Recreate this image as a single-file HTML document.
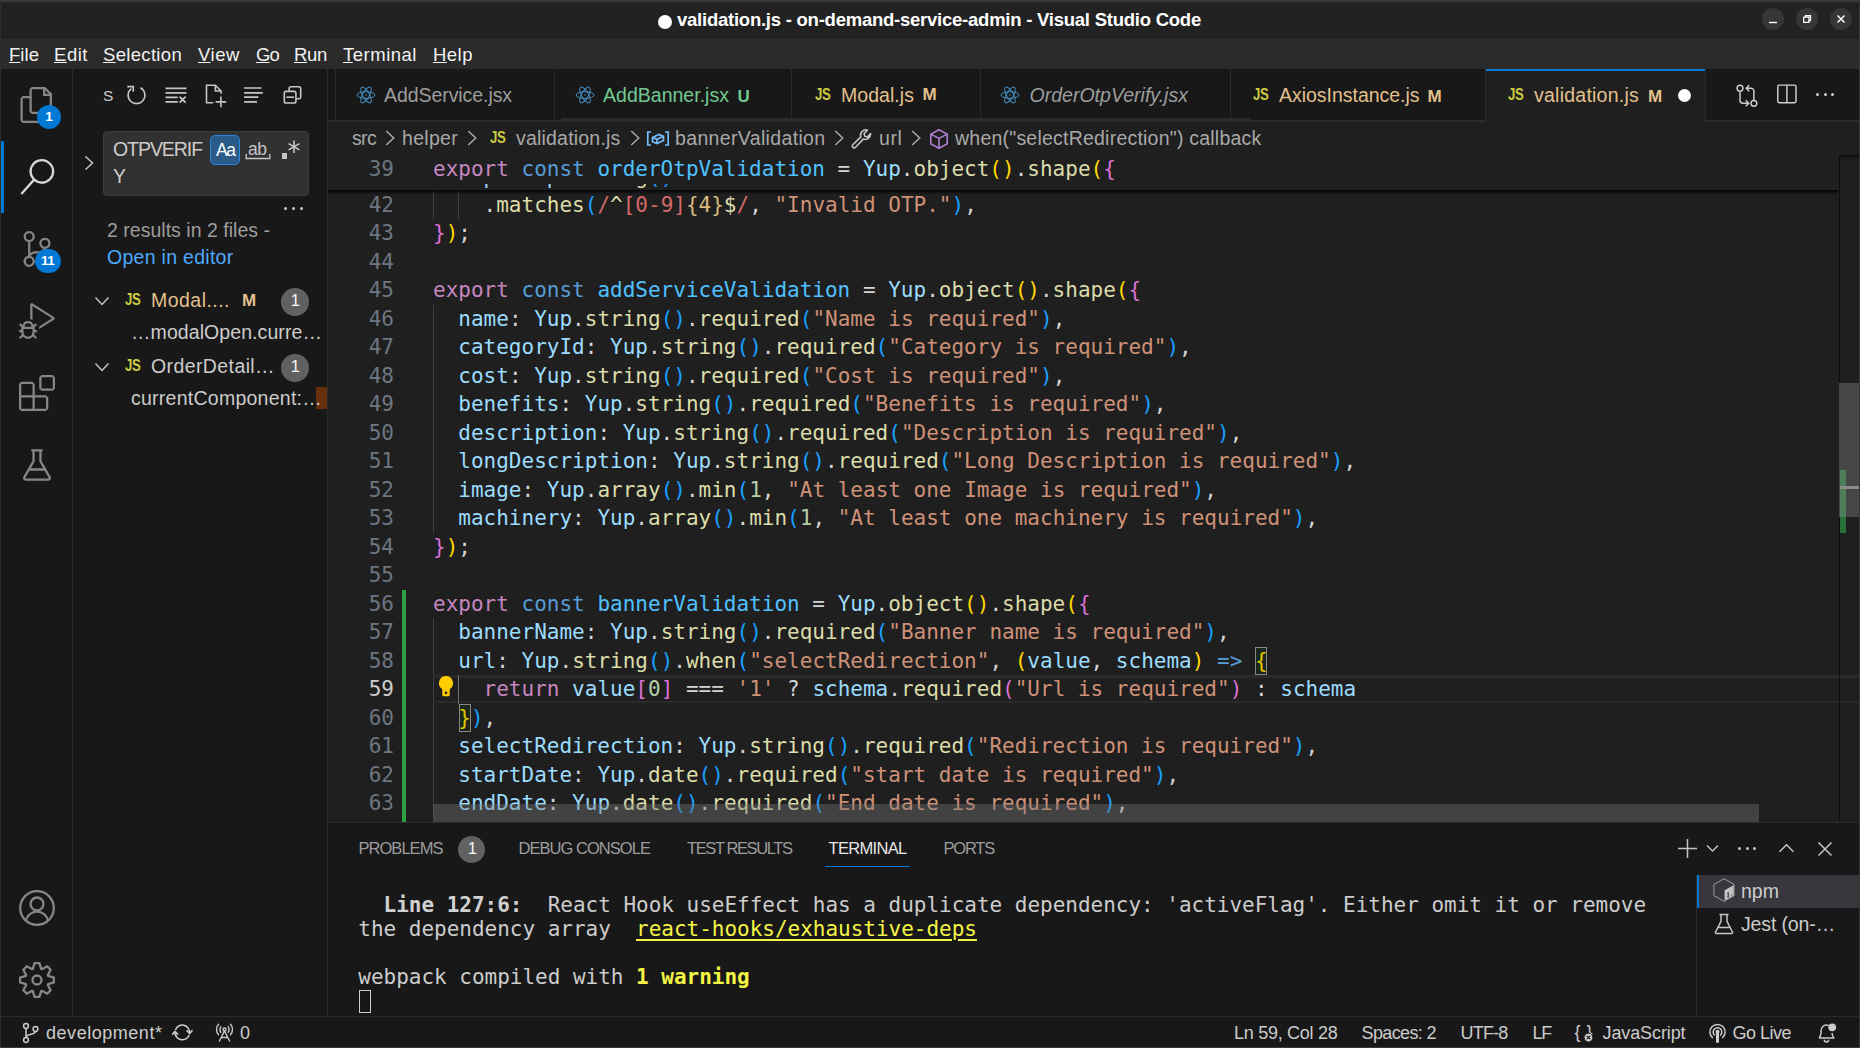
<!DOCTYPE html>
<html lang="en"><head><meta charset="utf-8"><title>validation.js - on-demand-service-admin - Visual Studio Code</title>
<style>
*{box-sizing:border-box}
html,body{margin:0;padding:0}
body{width:1860px;height:1048px;overflow:hidden;position:relative;background:#181818;font-family:'Liberation Sans', sans-serif;color:#ccc}
#root{position:absolute;left:0;top:0;width:1860px;height:1048px;overflow:hidden}
#root div,#root span.t,#root svg,#root pre{position:absolute}
span.t{white-space:pre;display:block}
.m{font-family:'DejaVu Sans Mono', 'Liberation Mono', monospace}
pre{margin:0;font-family:'DejaVu Sans Mono', 'Liberation Mono', monospace;font-size:21px;line-height:28px;white-space:pre;color:#d4d4d4}
u{text-decoration:underline;text-underline-offset:1px;text-decoration-thickness:1px}
.k{color:#c586c0}.c{color:#569cd6}.n{color:#4fc1ff}.v{color:#9cdcfe}.f{color:#dcdcaa}.s{color:#ce9178}.d{color:#b5cea8}
.b1{color:#ffd700}.b2{color:#da70d6}.b3{color:#179fff}.r{color:#d16969}.rq{color:#d7ba7d}.ry{color:#dcdcaa}
</style></head>
<body><div id="root">
<div style="left:0px;top:0px;width:1860px;height:38px;background:#222222;"></div>
<div style="left:0px;top:37px;width:1860px;height:1px;background:#191919;"></div>
<div style="left:0px;top:0px;width:1860px;height:1.5px;background:#3a3a3a;"></div>
<div style="left:0px;top:38px;width:1860px;height:31px;background:#2b2b2b;"></div>
<div style="left:0px;top:69px;width:1860px;height:979px;background:#181818;"></div>
<div style="left:72px;top:69px;width:1px;height:946px;background:#2b2b2b;"></div>
<div style="left:327px;top:69px;width:1px;height:946px;background:#2b2b2b;"></div>
<div style="left:328px;top:121px;width:1532px;height:701px;background:#1f1f1f;"></div>
<div style="left:328px;top:119.7px;width:1532px;height:2.3px;background:#2b2b2b;"></div>
<div style="left:328px;top:822px;width:1532px;height:1px;background:#2b2b2b;"></div>
<div style="left:0px;top:1016px;width:1860px;height:1px;background:#2b2b2b;"></div>
<div style="left:658px;top:14.5px;width:14px;height:14px;border-radius:50%;background:#fff"></div>
<span class="t" style="left:677px;top:7.05px;font-size:18.5px;line-height:25.9px;color:#fff;font-weight:bold;letter-spacing:-0.239px;">validation.js - on-demand-service-admin - Visual Studio Code</span>
<div style="left:1762.1px;top:8.1px;width:21.8px;height:21.8px;border-radius:50%;background:#373737"></div>
<div style="left:1796.1px;top:8.1px;width:21.8px;height:21.8px;border-radius:50%;background:#373737"></div>
<div style="left:1830.1px;top:8.1px;width:21.8px;height:21.8px;border-radius:50%;background:#373737"></div>
<svg style="left:1768px;top:14px;" width="10" height="10" viewBox="0 0 10 10"><path d="M1 8.5h8" stroke="#fff" stroke-width="1.4" fill="none"/></svg>
<svg style="left:1802px;top:14px;" width="10" height="10" viewBox="0 0 10 10"><path d="M1.7 3.2h5.2v5.2H1.7z M3.4 3V1.6h5.1v5.1H7.1" stroke="#fff" stroke-width="1.2" fill="none"/></svg>
<svg style="left:1836px;top:14px;" width="10" height="10" viewBox="0 0 10 10"><path d="M1.5 1.5l7 7M8.5 1.5l-7 7" stroke="#fff" stroke-width="1.5" fill="none"/></svg>
<span class="t" style="left:9px;top:42.05px;font-size:18.5px;line-height:25.9px;color:#f2f2f2;letter-spacing:0.043px;"><u>F</u>ile</span>
<span class="t" style="left:54px;top:42.05px;font-size:18.5px;line-height:25.9px;color:#f2f2f2;letter-spacing:0.527px;"><u>E</u>dit</span>
<span class="t" style="left:103px;top:42.05px;font-size:18.5px;line-height:25.9px;color:#f2f2f2;letter-spacing:0.321px;"><u>S</u>election</span>
<span class="t" style="left:198px;top:42.05px;font-size:18.5px;line-height:25.9px;color:#f2f2f2;letter-spacing:0.555px;"><u>V</u>iew</span>
<span class="t" style="left:256px;top:42.05px;font-size:18.5px;line-height:25.9px;color:#f2f2f2;letter-spacing:-0.844px;"><u>G</u>o</span>
<span class="t" style="left:294px;top:42.05px;font-size:18.5px;line-height:25.9px;color:#f2f2f2;letter-spacing:-0.318px;"><u>R</u>un</span>
<span class="t" style="left:343px;top:42.05px;font-size:18.5px;line-height:25.9px;color:#f2f2f2;letter-spacing:0.51px;"><u>T</u>erminal</span>
<span class="t" style="left:433px;top:42.05px;font-size:18.5px;line-height:25.9px;color:#f2f2f2;letter-spacing:0.48px;"><u>H</u>elp</span>
<div style="left:402px;top:590px;width:4px;height:232px;background:#2ea043;"></div>
<div style="left:433px;top:304.75px;width:1px;height:228.0px;background:#404040;"></div>
<div style="left:433px;top:617.75px;width:1px;height:199.5px;background:#404040;"></div>
<div style="left:433px;top:189.5px;width:1px;height:29px;background:#404040;"></div>
<div style="left:458px;top:189.5px;width:1px;height:29px;background:#404040;"></div>
<div style="left:433px;top:675px;width:1427px;height:2.5px;background:#2a2a2a;"></div>
<div style="left:433px;top:700.7px;width:1427px;height:2.6px;background:#2a2a2a;"></div>
<div style="left:457.7px;top:675px;width:1.8px;height:28.5px;background:#707070;"></div>
<span class="t m" style="right:1466px;top:191px;font-size:21px;line-height:28px;color:#6e7681">42</span>
<pre style="left:433px;top:191px">    .<span class="f">matches</span><span class="b3">(</span><span class="r">/</span><span class="ry">^</span><span class="r">[0-9]</span><span class="rq">{4}</span><span class="ry">$</span><span class="r">/</span>, <span class="s">"Invalid OTP."</span><span class="b3">)</span>,</pre>
<span class="t m" style="right:1466px;top:219px;font-size:21px;line-height:28px;color:#6e7681">43</span>
<pre style="left:433px;top:219px"><span class="b2">}</span><span class="b1">)</span>;</pre>
<span class="t m" style="right:1466px;top:248px;font-size:21px;line-height:28px;color:#6e7681">44</span>
<pre style="left:433px;top:248px"></pre>
<span class="t m" style="right:1466px;top:276px;font-size:21px;line-height:28px;color:#6e7681">45</span>
<pre style="left:433px;top:276px"><span class="k">export</span> <span class="c">const</span> <span class="n">addServiceValidation</span> = <span class="v">Yup</span>.<span class="f">object</span><span class="b1">()</span>.<span class="f">shape</span><span class="b1">(</span><span class="b2">{</span></pre>
<span class="t m" style="right:1466px;top:305px;font-size:21px;line-height:28px;color:#6e7681">46</span>
<pre style="left:433px;top:305px">  <span class="v">name</span>: <span class="v">Yup</span>.<span class="f">string</span><span class="b3">()</span>.<span class="f">required</span><span class="b3">(</span><span class="s">"Name is required"</span><span class="b3">)</span>,</pre>
<span class="t m" style="right:1466px;top:333px;font-size:21px;line-height:28px;color:#6e7681">47</span>
<pre style="left:433px;top:333px">  <span class="v">categoryId</span>: <span class="v">Yup</span>.<span class="f">string</span><span class="b3">()</span>.<span class="f">required</span><span class="b3">(</span><span class="s">"Category is required"</span><span class="b3">)</span>,</pre>
<span class="t m" style="right:1466px;top:362px;font-size:21px;line-height:28px;color:#6e7681">48</span>
<pre style="left:433px;top:362px">  <span class="v">cost</span>: <span class="v">Yup</span>.<span class="f">string</span><span class="b3">()</span>.<span class="f">required</span><span class="b3">(</span><span class="s">"Cost is required"</span><span class="b3">)</span>,</pre>
<span class="t m" style="right:1466px;top:390px;font-size:21px;line-height:28px;color:#6e7681">49</span>
<pre style="left:433px;top:390px">  <span class="v">benefits</span>: <span class="v">Yup</span>.<span class="f">string</span><span class="b3">()</span>.<span class="f">required</span><span class="b3">(</span><span class="s">"Benefits is required"</span><span class="b3">)</span>,</pre>
<span class="t m" style="right:1466px;top:419px;font-size:21px;line-height:28px;color:#6e7681">50</span>
<pre style="left:433px;top:419px">  <span class="v">description</span>: <span class="v">Yup</span>.<span class="f">string</span><span class="b3">()</span>.<span class="f">required</span><span class="b3">(</span><span class="s">"Description is required"</span><span class="b3">)</span>,</pre>
<span class="t m" style="right:1466px;top:447px;font-size:21px;line-height:28px;color:#6e7681">51</span>
<pre style="left:433px;top:447px">  <span class="v">longDescription</span>: <span class="v">Yup</span>.<span class="f">string</span><span class="b3">()</span>.<span class="f">required</span><span class="b3">(</span><span class="s">"Long Description is required"</span><span class="b3">)</span>,</pre>
<span class="t m" style="right:1466px;top:476px;font-size:21px;line-height:28px;color:#6e7681">52</span>
<pre style="left:433px;top:476px">  <span class="v">image</span>: <span class="v">Yup</span>.<span class="f">array</span><span class="b3">()</span>.<span class="f">min</span><span class="b3">(</span><span class="d">1</span>, <span class="s">"At least one Image is required"</span><span class="b3">)</span>,</pre>
<span class="t m" style="right:1466px;top:504px;font-size:21px;line-height:28px;color:#6e7681">53</span>
<pre style="left:433px;top:504px">  <span class="v">machinery</span>: <span class="v">Yup</span>.<span class="f">array</span><span class="b3">()</span>.<span class="f">min</span><span class="b3">(</span><span class="d">1</span>, <span class="s">"At least one machinery is required"</span><span class="b3">)</span>,</pre>
<span class="t m" style="right:1466px;top:533px;font-size:21px;line-height:28px;color:#6e7681">54</span>
<pre style="left:433px;top:533px"><span class="b2">}</span><span class="b1">)</span>;</pre>
<span class="t m" style="right:1466px;top:561px;font-size:21px;line-height:28px;color:#6e7681">55</span>
<pre style="left:433px;top:561px"></pre>
<span class="t m" style="right:1466px;top:590px;font-size:21px;line-height:28px;color:#6e7681">56</span>
<pre style="left:433px;top:590px"><span class="k">export</span> <span class="c">const</span> <span class="n">bannerValidation</span> = <span class="v">Yup</span>.<span class="f">object</span><span class="b1">()</span>.<span class="f">shape</span><span class="b1">(</span><span class="b2">{</span></pre>
<span class="t m" style="right:1466px;top:618px;font-size:21px;line-height:28px;color:#6e7681">57</span>
<pre style="left:433px;top:618px">  <span class="v">bannerName</span>: <span class="v">Yup</span>.<span class="f">string</span><span class="b3">()</span>.<span class="f">required</span><span class="b3">(</span><span class="s">"Banner name is required"</span><span class="b3">)</span>,</pre>
<span class="t m" style="right:1466px;top:647px;font-size:21px;line-height:28px;color:#6e7681">58</span>
<pre style="left:433px;top:647px">  <span class="v">url</span>: <span class="v">Yup</span>.<span class="f">string</span><span class="b3">()</span>.<span class="f">when</span><span class="b3">(</span><span class="s">"selectRedirection"</span>, <span class="b1">(</span><span class="v">value</span>, <span class="v">schema</span><span class="b1">)</span> <span class="c">=&gt;</span> <span class="b1">{</span></pre>
<span class="t m" style="right:1466px;top:675px;font-size:21px;line-height:28px;color:#ccc">59</span>
<pre style="left:433px;top:675px">    <span class="k">return</span> <span class="v">value</span><span class="b2">[</span><span class="d">0</span><span class="b2">]</span> === <span class="s">'1'</span> ? <span class="v">schema</span>.<span class="f">required</span><span class="b2">(</span><span class="s">"Url is required"</span><span class="b2">)</span> : <span class="v">schema</span></pre>
<span class="t m" style="right:1466px;top:704px;font-size:21px;line-height:28px;color:#6e7681">60</span>
<pre style="left:433px;top:704px">  <span class="b1">}</span><span class="b3">)</span>,</pre>
<span class="t m" style="right:1466px;top:732px;font-size:21px;line-height:28px;color:#6e7681">61</span>
<pre style="left:433px;top:732px">  <span class="v">selectRedirection</span>: <span class="v">Yup</span>.<span class="f">string</span><span class="b3">()</span>.<span class="f">required</span><span class="b3">(</span><span class="s">"Redirection is required"</span><span class="b3">)</span>,</pre>
<span class="t m" style="right:1466px;top:761px;font-size:21px;line-height:28px;color:#6e7681">62</span>
<pre style="left:433px;top:761px">  <span class="v">startDate</span>: <span class="v">Yup</span>.<span class="f">date</span><span class="b3">()</span>.<span class="f">required</span><span class="b3">(</span><span class="s">"start date is required"</span><span class="b3">)</span>,</pre>
<span class="t m" style="right:1466px;top:789px;font-size:21px;line-height:28px;color:#6e7681">63</span>
<pre style="left:433px;top:789px">  <span class="v">endDate</span>: <span class="v">Yup</span>.<span class="f">date</span><span class="b3">()</span>.<span class="f">required</span><span class="b3">(</span><span class="s">"End date is required"</span><span class="b3">)</span>,</pre>
<div style="left:1255px;top:647px;width:12px;height:28px;background:rgba(0,100,0,0.12);border:1px solid #888"></div>
<div style="left:458.8px;top:704px;width:12px;height:28px;background:rgba(0,100,0,0.12);border:1px solid #888"></div>
<div style="left:328px;top:154px;width:1510px;height:36px;background:#1f1f1f;overflow:hidden">
<span class="t m" style="right:1444px;top:9px;font-size:21px;line-height:28px;color:#6e7681">40</span>
<pre style="left:105px;top:9px">  <span class="v">otp</span>: <span class="v">Yup</span>.<span class="f">string</span><span class="b3">()</span></pre>
<div style="left:0;top:0;width:1510px;height:29.6px;background:#1f1f1f"></div>
<span class="t m" style="right:1444px;top:1px;font-size:21px;line-height:28px;color:#6e7681">39</span>
<pre style="left:105px;top:1px"><span class="k">export</span> <span class="c">const</span> <span class="n">orderOtpValidation</span> = <span class="v">Yup</span>.<span class="f">object</span><span class="b1">()</span>.<span class="f">shape</span><span class="b1">(</span><span class="b2">{</span></pre>
</div>
<div style="left:328px;top:190px;width:1510px;height:5px;background:linear-gradient(#000 0,rgba(0,0,0,.55) 30%,rgba(0,0,0,0) 100%)"></div>
<div style="left:1839px;top:155px;width:1px;height:667px;background:#0d0d0d;"></div>
<div style="left:1840px;top:155px;width:19px;height:4px;background:linear-gradient(#0a0a0a,rgba(0,0,0,0))"></div>
<div style="left:1839px;top:383px;width:20.5px;height:133.7px;background:#464646;"></div>
<div style="left:1840px;top:470px;width:6px;height:46.7px;background:#4f7e5b;"></div>
<div style="left:1840px;top:516.7px;width:6px;height:16.6px;background:#28713a;"></div>
<div style="left:1840px;top:486.3px;width:19.3px;height:3.2px;background:#8c8c8c;"></div>
<div style="left:433px;top:804.3px;width:1326px;height:17.7px;background:rgba(121,121,121,0.4);"></div>
<div style="left:335px;top:69px;width:1px;height:52px;background:#2b2b2b;"></div>
<div style="left:554px;top:69px;width:1px;height:52px;background:#2b2b2b;"></div>
<div style="left:791px;top:69px;width:1px;height:52px;background:#2b2b2b;"></div>
<div style="left:980px;top:69px;width:1px;height:52px;background:#2b2b2b;"></div>
<div style="left:1230px;top:69px;width:1px;height:52px;background:#2b2b2b;"></div>
<div style="left:1485px;top:69px;width:1px;height:52px;background:#2b2b2b;"></div>
<div style="left:1705px;top:69px;width:1px;height:52px;background:#2b2b2b;"></div>
<div style="left:1486px;top:69px;width:219px;height:53px;background:#1f1f1f;"></div>
<div style="left:1486px;top:69px;width:219px;height:2px;background:#0078d4;"></div>
<div style="left:561px;top:118px;width:690px;height:3px;background:#2c2c2c;"></div>
<svg style="left:355px;top:84px;" width="22" height="22" viewBox="-11 -11 22 22"><ellipse cx="0" cy="0" rx="8.9" ry="3.382" transform="rotate(0)" fill="none" stroke="#4693c6" stroke-width="0.95"/><ellipse cx="0" cy="0" rx="8.9" ry="3.382" transform="rotate(60)" fill="none" stroke="#4693c6" stroke-width="0.95"/><ellipse cx="0" cy="0" rx="8.9" ry="3.382" transform="rotate(120)" fill="none" stroke="#4693c6" stroke-width="0.95"/><circle cx="0" cy="0" r="0.9" fill="#4693c6" opacity="0.6"/></svg>
<span class="t" style="left:384px;top:82.35px;font-size:19.5px;line-height:27.3px;color:#9d9d9d;letter-spacing:-0.069px;">AddService.jsx</span>
<svg style="left:574px;top:84px;" width="22" height="22" viewBox="-11 -11 22 22"><ellipse cx="0" cy="0" rx="8.9" ry="3.382" transform="rotate(0)" fill="none" stroke="#4693c6" stroke-width="0.95"/><ellipse cx="0" cy="0" rx="8.9" ry="3.382" transform="rotate(60)" fill="none" stroke="#4693c6" stroke-width="0.95"/><ellipse cx="0" cy="0" rx="8.9" ry="3.382" transform="rotate(120)" fill="none" stroke="#4693c6" stroke-width="0.95"/><circle cx="0" cy="0" r="0.9" fill="#4693c6" opacity="0.6"/></svg>
<span class="t" style="left:603px;top:82.35px;font-size:19.5px;line-height:27.3px;color:#73c991;letter-spacing:0.018px;">AddBanner.jsx</span>
<span class="t" style="left:737.5px;top:85.1px;font-size:17px;line-height:23.8px;color:#73c991;font-weight:bold;letter-spacing:-0.781px;">U</span>
<span class="t" style="left:814.5px;top:83.25px;font-size:16.5px;line-height:23.1px;color:#cbcb41;font-weight:bold;transform:scaleX(0.8);transform-origin:0 50%;letter-spacing:-0.425px;">JS</span>
<span class="t" style="left:841px;top:82.35px;font-size:19.5px;line-height:27.3px;color:#e2c08d;letter-spacing:0.047px;">Modal.js</span>
<span class="t" style="left:922.5px;top:82.6px;font-size:17px;line-height:23.8px;color:#e2c08d;font-weight:bold;letter-spacing:0.328px;">M</span>
<svg style="left:999px;top:84px;" width="22" height="22" viewBox="-11 -11 22 22"><ellipse cx="0" cy="0" rx="8.9" ry="3.382" transform="rotate(0)" fill="none" stroke="#4693c6" stroke-width="0.95"/><ellipse cx="0" cy="0" rx="8.9" ry="3.382" transform="rotate(60)" fill="none" stroke="#4693c6" stroke-width="0.95"/><ellipse cx="0" cy="0" rx="8.9" ry="3.382" transform="rotate(120)" fill="none" stroke="#4693c6" stroke-width="0.95"/><circle cx="0" cy="0" r="0.9" fill="#4693c6" opacity="0.6"/></svg>
<span class="t" style="left:1029.5px;top:82.35px;font-size:19.5px;line-height:27.3px;color:#9d9d9d;font-style:italic;letter-spacing:0.016px;">OrderOtpVerify.jsx</span>
<span class="t" style="left:1252.5px;top:83.25px;font-size:16.5px;line-height:23.1px;color:#cbcb41;font-weight:bold;transform:scaleX(0.8);transform-origin:0 50%;letter-spacing:-0.425px;">JS</span>
<span class="t" style="left:1279px;top:82.35px;font-size:19.5px;line-height:27.3px;color:#e2c08d;letter-spacing:-0.025px;">AxiosInstance.js</span>
<span class="t" style="left:1427.5px;top:84.6px;font-size:17px;line-height:23.8px;color:#e2c08d;font-weight:bold;letter-spacing:0.328px;">M</span>
<span class="t" style="left:1508px;top:83.25px;font-size:16.5px;line-height:23.1px;color:#cbcb41;font-weight:bold;transform:scaleX(0.8);transform-origin:0 50%;letter-spacing:-0.425px;">JS</span>
<span class="t" style="left:1534px;top:82.35px;font-size:19.5px;line-height:27.3px;color:#e2c08d;letter-spacing:0.239px;">validation.js</span>
<span class="t" style="left:1648px;top:84.6px;font-size:17px;line-height:23.8px;color:#e2c08d;font-weight:bold;letter-spacing:0.328px;">M</span>
<div style="left:1677.5px;top:88.5px;width:13.5px;height:13.5px;border-radius:50%;background:#fff"></div>
<svg style="left:1735px;top:83px;" width="24" height="24" viewBox="0 0 24 24"><g fill="none" stroke="#d0d0d0" stroke-width="1.450"><circle cx="5" cy="5.200" r="2.900"/><circle cx="18.900" cy="20.300" r="2.900"/><path d="M5 8.200v9a3 3 0 0 0 3 3h5.500M10.700 17.300l3 3-3 3M18.900 17.300V8.200a3 3 0 0 0-3-3h-4.700M14.200 8.200l-3-3 3-3"/></g></svg>
<svg style="left:1775px;top:82.3px;" width="24" height="24" viewBox="0 0 24 24"><g fill="none" stroke="#d0d0d0" stroke-width="1.450"><rect x="2.800" y="3.100" width="18.200" height="17.600" rx="1.400"/><path d="M11.900 3v18"/></g></svg>
<div style="left:1816px;top:93.300px;width:3px;height:3px;border-radius:50%;background:#d0d0d0"></div>
<div style="left:1823.5px;top:93.300px;width:3px;height:3px;border-radius:50%;background:#d0d0d0"></div>
<div style="left:1831px;top:93.300px;width:3px;height:3px;border-radius:50%;background:#d0d0d0"></div>
<span class="t" style="left:352px;top:124.85px;font-size:19.5px;line-height:27.3px;color:#a9a9a9;letter-spacing:-0.667px;">src</span>
<svg style="left:384px;top:129.3px;" width="12" height="18" viewBox="0 0 12 18"><path d="M2.250 2l7.500 7-7.500 7" fill="none" stroke="#a9a9a9" stroke-width="1.500"/></svg>
<span class="t" style="left:402px;top:124.85px;font-size:19.5px;line-height:27.3px;color:#a9a9a9;letter-spacing:0.297px;">helper</span>
<svg style="left:465.5px;top:129.3px;" width="12" height="18" viewBox="0 0 12 18"><path d="M2.250 2l7.500 7-7.500 7" fill="none" stroke="#a9a9a9" stroke-width="1.500"/></svg>
<span class="t" style="left:490px;top:126.25px;font-size:16.5px;line-height:23.1px;color:#cbcb41;font-weight:bold;transform:scaleX(0.8);transform-origin:0 50%;letter-spacing:-0.425px;">JS</span>
<span class="t" style="left:516px;top:124.85px;font-size:19.5px;line-height:27.3px;color:#a9a9a9;letter-spacing:0.201px;">validation.js</span>
<svg style="left:628.5px;top:129.3px;" width="12" height="18" viewBox="0 0 12 18"><path d="M2.250 2l7.500 7-7.500 7" fill="none" stroke="#a9a9a9" stroke-width="1.500"/></svg>
<svg style="left:646px;top:128px;" width="24" height="22" viewBox="0 0 24 22"><g fill="none" stroke="#75beff" stroke-width="1.7"><path d="M5 4H1.8v13H5M19 4h3.2v13H19"/><path d="M6.5 9.5l6.5-3 4.5 1.8v4.2l-6.5 3-4.5-1.8zM6.5 9.5l4.5 1.8 6.5-3M11 11.3v4.2"/></g></svg>
<span class="t" style="left:675px;top:124.85px;font-size:19.5px;line-height:27.3px;color:#a9a9a9;letter-spacing:0.349px;">bannerValidation</span>
<svg style="left:832.5px;top:129.3px;" width="12" height="18" viewBox="0 0 12 18"><path d="M2.250 2l7.500 7-7.500 7" fill="none" stroke="#a9a9a9" stroke-width="1.500"/></svg>
<svg style="left:851px;top:128px;" width="22" height="22" viewBox="0 0 22 22"><path d="M19.5 6.2a5.3 5.3 0 0 1-7.3 4.9l-7.6 8.2a1.9 1.9 0 0 1-2.8-2.6l8-7.8a5.3 5.3 0 0 1 6.6-6.7l-3.3 3.4.7 2.6 2.7.7 3.1-3.4c.1.3-.1.4-.1.7z" fill="none" stroke="#c5c5c5" stroke-width="1.6" stroke-linejoin="round"/></svg>
<span class="t" style="left:879px;top:124.85px;font-size:19.5px;line-height:27.3px;color:#a9a9a9;letter-spacing:0.609px;">url</span>
<svg style="left:909.5px;top:129.3px;" width="12" height="18" viewBox="0 0 12 18"><path d="M2.250 2l7.500 7-7.500 7" fill="none" stroke="#a9a9a9" stroke-width="1.500"/></svg>
<svg style="left:928px;top:128px;" width="22" height="22" viewBox="0 0 22 22"><g fill="none" stroke="#b180d7" stroke-width="1.6" stroke-linejoin="round"><path d="M11 1.8l8.2 4.3v9.8L11 20.2l-8.2-4.3V6.1z"/><path d="M2.8 6.1L11 10.4l8.2-4.3M11 10.4v9.8"/></g></svg>
<span class="t" style="left:955px;top:124.85px;font-size:19.5px;line-height:27.3px;color:#a9a9a9;letter-spacing:0.224px;">when("selectRedirection") callback</span>
<svg style="left:437px;top:676.3px;" width="18" height="21" viewBox="0 0 18 21"><path fill-rule="evenodd" d="M9 .050a7.050 7.050 0 0 0-4.200 12.700c.400.400.500.800.500 1.300V19a1.200 1.200 0 0 0 1.200 1.200h5a1.200 1.200 0 0 0 1.200-1.200v-4.950c0-.500.100-.900.500-1.300A7.050 7.050 0 0 0 9 .050zM7.900 15.400h2.200v2.600H7.900z" fill="#ffcc00"/></svg>
<svg style="left:18.5px;top:87px;" width="36" height="36" viewBox="0 0 24 24"><path d="M17.5 0h-9L7 1.5V6H2.5L1 7.5v15.07L2.5 24h12.07L16 22.57V18h4.7l1.3-1.43V4.5L17.5 0zm0 2.12l2.38 2.38H17.5V2.12zm-3 20.38h-12v-15H7v9.07L8.5 18h6v4.5zm6-6h-12v-15H16V6h4.5v10.5z" fill="#868686"/></svg>
<svg style="left:18.5px;top:159px;" width="36" height="36" viewBox="0 0 24 24"><path d="M15.25 0a8.25 8.25 0 0 0-6.18 13.72L1 22.88l1.12 1 8.05-9.12A8.251 8.251 0 1 0 15.25.01V0zm0 15a6.75 6.75 0 1 1 0-13.5 6.75 6.75 0 0 1 0 13.5z" fill="#d7d7d7"/></svg>
<svg style="left:18.5px;top:231px;" width="36" height="36" viewBox="0 0 24 24"><path d="M21.007 8.222A3.738 3.738 0 0 0 15.045 5.2a3.737 3.737 0 0 0 1.156 6.583 2.988 2.988 0 0 1-2.668 1.67h-2.99a4.456 4.456 0 0 0-2.989 1.165V7.4a3.737 3.737 0 1 0-1.494 0v9.117a3.776 3.776 0 1 0 1.816.099 2.99 2.99 0 0 1 2.668-1.667h2.99a4.484 4.484 0 0 0 4.223-3.039 3.736 3.736 0 0 0 3.25-3.687zM4.565 3.738a2.242 2.242 0 1 1 4.484 0 2.242 2.242 0 0 1-4.484 0zm4.484 16.441a2.242 2.242 0 1 1-4.484 0 2.242 2.242 0 0 1 4.484 0zm8.221-9.715a2.242 2.242 0 1 1 0-4.485 2.242 2.242 0 0 1 0 4.485z" fill="#868686"/></svg>
<svg style="left:18.5px;top:303px;" width="36" height="36" viewBox="0 0 24 24"><path d="M10.94 13.5l-1.32 1.32a3.73 3.73 0 0 0-7.24 0L1.06 13.5 0 14.56l1.72 1.72-.22.22V18H0v1.5h1.5v.08c.077.489.214.966.41 1.42L0 22.94 1.06 24l1.65-1.65A4.308 4.308 0 0 0 6 24a4.31 4.31 0 0 0 3.29-1.65L10.94 24 12 22.94 10.09 21c.198-.464.336-.951.41-1.45v-.1H12V18h-1.5v-1.5l-.22-.22L12 14.56l-1.06-1.06zM6 13.5a2.25 2.25 0 0 1 2.25 2.25h-4.5A2.25 2.25 0 0 1 6 13.5zm3 6a3.33 3.33 0 0 1-3 3 3.33 3.33 0 0 1-3-3v-2.25h6v2.25zm14.76-9.9v1.26L13.5 17.37V15.6l8.5-5.37L9 2v9.46a5.07 5.07 0 0 0-1.5-.72V.63L8.64 0l15.12 9.6z" fill="#868686"/></svg>
<svg style="left:18.5px;top:375px;" width="36" height="36" viewBox="0 0 24 24"><path d="M13.5 1.5L15 0h7.5L24 1.5V9l-1.5 1.5H15L13.5 9V1.5zm1.5 0V9h7.5V1.5H15zM0 15V6l1.5-1.5H9L10.5 6v7.5H18l1.5 1.5v7.5L18 24H1.5L0 22.5V15zm9-1.5V6H1.5v7.5H9zM9 15H1.5v7.5H9V15zm1.5 7.5H18V15h-7.5v7.5z" fill="#868686"/></svg>
<svg style="left:18.5px;top:447px;" width="36" height="36" viewBox="0 0 24 24"><path d="M8.2 2.2h7.6M9.7 2.2v7.3L3.6 20.1a1 1 0 0 0 .9 1.6h15a1 1 0 0 0 .9-1.6L14.3 9.5V2.2M6.6 15h10.8" fill="none" stroke="#868686" stroke-width="1.55" stroke-linejoin="round"/></svg>
<svg style="left:18.5px;top:890px;" width="36" height="36" viewBox="0 0 24 24"><g fill="none" stroke="#868686" stroke-width="1.55"><circle cx="12" cy="12" r="11.2"/><circle cx="12" cy="9.3" r="4.3"/><path d="M4.6 20.3a7.6 7.6 0 0 1 14.8 0"/></g></svg>
<svg style="left:18.5px;top:962.2px;" width="36" height="36" viewBox="0 0 24 24"><g fill="none" stroke="#868686" stroke-width="1.55" stroke-linejoin="round"><path d="M9.18 4.62L10.39 0.71L13.61 0.71L14.82 4.62L15.23 4.79L18.84 2.88L21.12 5.16L19.21 8.77L19.38 9.18L23.29 10.39L23.29 13.61L19.38 14.82L19.21 15.23L21.12 18.84L18.84 21.12L15.23 19.21L14.82 19.38L13.61 23.29L10.39 23.29L9.18 19.38L8.77 19.21L5.16 21.12L2.88 18.84L4.79 15.23L4.62 14.82L0.71 13.61L0.71 10.39L4.62 9.18L4.79 8.77L2.88 5.16L5.16 2.88L8.77 4.79z"/><circle cx="12" cy="12" r="3"/></g></svg>
<div style="left:1px;top:141px;width:3px;height:72px;background:#0078d4;"></div>
<div style="left:36.5px;top:105px;width:24px;height:24px;border-radius:50%;background:#0078d4"></div>
<span class="t" style="left:45.25px;top:108.05px;font-size:13.5px;line-height:18.9px;color:#fff;font-weight:bold;letter-spacing:-1.016px;">1</span>
<div style="left:34.5px;top:248.5px;width:26.5px;height:24px;border-radius:12px;background:#0078d4"></div>
<span class="t" style="left:41px;top:251.55px;font-size:13.5px;line-height:18.9px;color:#fff;font-weight:bold;letter-spacing:-0.391px;">11</span>
<span class="t" style="left:103px;top:84.65px;font-size:15.5px;line-height:21.7px;color:#ccc;letter-spacing:-1.344px;">S</span>
<svg style="left:125px;top:83px;" width="24" height="24" viewBox="0 0 24 24"><path d="M15.440 4.780A8.400 8.400 0 1 1 6.330 5.580M2.300 3.600h6v5.200" fill="none" stroke="#c5c5c5" stroke-width="1.600"/></svg>
<svg style="left:164.6px;top:83px;" width="24" height="24" viewBox="0 0 24 24"><path d="M0.500 5.400h21M0.500 9.900h21M0.500 14.300h12.300M0.500 18.900h12.300M14.600 13.600l6 6M20.600 13.600l-6 6" fill="none" stroke="#c5c5c5" stroke-width="1.700"/></svg>
<svg style="left:203px;top:81px;" width="26" height="28" viewBox="0 0 26 28"><path d="M10.200 21.700H3.500V4.300h8.900l5.700 5.700v2.700M12.400 4.600v5.400h5.400M12.600 20.900h10.600M17.900 15.600v10.600" fill="none" stroke="#c5c5c5" stroke-width="1.600"/></svg>
<svg style="left:243px;top:83px;" width="24" height="24" viewBox="0 0 24 24"><path d="M1.100 5h17.400M1.100 9.800h18.700M1.100 14.200h14.200M1.100 18.900h12.900" fill="none" stroke="#c5c5c5" stroke-width="1.700"/></svg>
<svg style="left:281px;top:83px;" width="24" height="24" viewBox="0 0 24 24"><g fill="none" stroke="#c5c5c5" stroke-width="1.600"><path d="M8.100 8.400V5.600a1.800 1.800 0 0 1 1.800-1.800h8a1.800 1.800 0 0 1 1.800 1.800v8.400a1.800 1.800 0 0 1-1.800 1.800h-3"/><rect x="3.300" y="8.400" width="11.600" height="11.600" rx="1.800"/><path d="M5.400 14.200h7.700"/></g></svg>
<svg style="left:82.5px;top:153.8px;" width="12.0" height="18.0" viewBox="0 0 12 18"><path d="M2.5 2.5l7 6.5-7 6.5" fill="none" stroke="#c5c5c5" stroke-width="1.5"/></svg>
<div style="left:103px;top:131px;width:206px;height:64.5px;background:#313131;border:1px solid #3c3c3c;border-radius:4px"></div>
<span class="t" style="left:113px;top:135.85px;font-size:19.5px;line-height:27.3px;color:#ccc;letter-spacing:-1.064px;">OTPVERIF</span>
<span class="t" style="left:113px;top:162.85px;font-size:19.5px;line-height:27.3px;color:#ccc;letter-spacing:-1.516px;">Y</span>
<div style="left:210px;top:135px;width:30px;height:30px;background:#295a88;border:1.5px solid #2488db;border-radius:5px"></div>
<span class="t" style="left:216px;top:137.75px;font-size:17.5px;line-height:24.5px;color:#fff;letter-spacing:-1.453px;">Aa</span>
<span class="t" style="left:248px;top:136.75px;font-size:17.5px;line-height:24.5px;color:#c5c5c5;letter-spacing:-0.484px;">ab</span>
<svg style="left:245px;top:153px;" width="26" height="8" viewBox="0 0 26 8"><path d="M1.2 1v4.500h23.600V1" fill="none" stroke="#c5c5c5" stroke-width="1.400"/></svg>
<div style="left:281.5px;top:153px;width:5.5px;height:6px;background:#c5c5c5;"></div>
<svg style="left:287px;top:139px;" width="14" height="16" viewBox="0 0 14 16"><path d="M7 1.500v12.500M1.600 4.600l10.800 6.300M12.400 4.600L1.600 10.900" fill="none" stroke="#c5c5c5" stroke-width="1.600"/></svg>
<div style="left:284px;top:206.5px;width:3px;height:3px;border-radius:50%;background:#c5c5c5"></div>
<div style="left:292px;top:206.5px;width:3px;height:3px;border-radius:50%;background:#c5c5c5"></div>
<div style="left:300px;top:206.5px;width:3px;height:3px;border-radius:50%;background:#c5c5c5"></div>
<span class="t" style="left:107px;top:217.35px;font-size:19.5px;line-height:27.3px;color:#9d9d9d;letter-spacing:0.02px;">2 results in 2 files -</span>
<span class="t" style="left:107px;top:244.35px;font-size:19.5px;line-height:27.3px;color:#4daafc;letter-spacing:0.286px;">Open in editor</span>
<svg style="left:92.5px;top:294.5px;" width="18" height="12" viewBox="0 0 18 12"><path d="M2.5 2.5l6.5 7 6.5-7" fill="none" stroke="#c5c5c5" stroke-width="1.5"/></svg>
<span class="t" style="left:125px;top:288.25px;font-size:16.5px;line-height:23.1px;color:#cbcb41;font-weight:bold;transform:scaleX(0.8);transform-origin:0 50%;letter-spacing:-0.425px;">JS</span>
<span class="t" style="left:151px;top:286.85px;font-size:19.5px;line-height:27.3px;color:#e2c08d;letter-spacing:0.467px;">Modal....</span>
<span class="t" style="left:242px;top:289.1px;font-size:17px;line-height:23.8px;color:#e2c08d;font-weight:bold;letter-spacing:0.328px;">M</span>
<div style="left:280.5px;top:287.5px;width:28px;height:28px;border-radius:50%;background:#616161"></div>
<span class="t" style="left:290.75px;top:289.25px;font-size:16.5px;line-height:23.1px;color:#f8f8f8;letter-spacing:-1.688px;">1</span>
<span class="t" style="left:131px;top:318.85px;font-size:19.5px;line-height:27.3px;color:#ccc;letter-spacing:0.078px;">…modalOpen.curre…</span>
<svg style="left:92.5px;top:360.5px;" width="18" height="12" viewBox="0 0 18 12"><path d="M2.5 2.5l6.5 7 6.5-7" fill="none" stroke="#c5c5c5" stroke-width="1.5"/></svg>
<span class="t" style="left:125px;top:354.25px;font-size:16.5px;line-height:23.1px;color:#cbcb41;font-weight:bold;transform:scaleX(0.8);transform-origin:0 50%;letter-spacing:-0.425px;">JS</span>
<span class="t" style="left:151px;top:352.85px;font-size:19.5px;line-height:27.3px;color:#ccc;letter-spacing:0.4px;">OrderDetail…</span>
<div style="left:280.5px;top:353.5px;width:28px;height:28px;border-radius:50%;background:#616161"></div>
<span class="t" style="left:290.75px;top:355.25px;font-size:16.5px;line-height:23.1px;color:#f8f8f8;letter-spacing:-1.688px;">1</span>
<div style="left:316px;top:387px;width:10.5px;height:21.5px;background:#66300c;"></div>
<span class="t" style="left:131px;top:384.85px;font-size:19.5px;line-height:27.3px;color:#ccc;letter-spacing:0.254px;">currentComponent:…</span>
<span class="t" style="left:358.5px;top:836.95px;font-size:16.5px;line-height:23.1px;color:#9d9d9d;letter-spacing:-0.963px;">PROBLEMS</span>
<div style="left:458.0px;top:835.5px;width:27.0px;height:27.0px;border-radius:50%;background:#616161"></div>
<span class="t" style="left:467.75px;top:836.75px;font-size:16.5px;line-height:23.1px;color:#f8f8f8;letter-spacing:-1.688px;">1</span>
<span class="t" style="left:518.5px;top:836.95px;font-size:16.5px;line-height:23.1px;color:#9d9d9d;letter-spacing:-0.958px;">DEBUG CONSOLE</span>
<span class="t" style="left:687px;top:836.95px;font-size:16.5px;line-height:23.1px;color:#9d9d9d;letter-spacing:-1.404px;">TEST RESULTS</span>
<span class="t" style="left:828.5px;top:836.95px;font-size:16.5px;line-height:23.1px;color:#e7e7e7;letter-spacing:-0.68px;">TERMINAL</span>
<div style="left:825px;top:865.5px;width:85px;height:1.5px;background:#0078d4;"></div>
<span class="t" style="left:943.5px;top:836.95px;font-size:16.5px;line-height:23.1px;color:#9d9d9d;letter-spacing:-1.209px;">PORTS</span>
<svg style="left:1677px;top:838px;" width="21" height="21" viewBox="0 0 21 21"><path d="M10.5 1v19M1 10.5h19" fill="none" stroke="#c5c5c5" stroke-width="1.5"/></svg>
<svg style="left:1706px;top:844px;" width="13" height="9" viewBox="0 0 13 9"><path d="M1 1.5l5.500 5.500L12 1.500" fill="none" stroke="#c5c5c5" stroke-width="1.400"/></svg>
<div style="left:1738px;top:847px;width:3px;height:3px;border-radius:50%;background:#c5c5c5"></div>
<div style="left:1745.5px;top:847px;width:3px;height:3px;border-radius:50%;background:#c5c5c5"></div>
<div style="left:1753px;top:847px;width:3px;height:3px;border-radius:50%;background:#c5c5c5"></div>
<svg style="left:1778.3px;top:842px;" width="17" height="12" viewBox="0 0 17 12"><path d="M1.500 9.800L8.500 2.800 15.500 9.800" fill="none" stroke="#c5c5c5" stroke-width="1.500"/></svg>
<svg style="left:1817px;top:841px;" width="16" height="16" viewBox="0 0 16 16"><path d="M1.500 1.500l13 13M14.500 1.500l-13 13" fill="none" stroke="#c5c5c5" stroke-width="1.500"/></svg>
<pre style="left:358.3px;top:893.3px;line-height:24.4px;color:#ccc;letter-spacing:-0.018px">  <b style="color:#d0d0d0">Line 127:6:</b>  React Hook useEffect has a duplicate dependency: 'activeFlag'. Either omit it or remove</pre>
<pre style="left:358.3px;top:916.8px;line-height:24.4px;color:#ccc;letter-spacing:-0.018px">the dependency array  <span style="color:#f5f543;text-decoration:underline;text-underline-offset:3px">react-hooks/exhaustive-deps</span></pre>
<pre style="left:358.3px;top:965.3px;line-height:24.4px;color:#ccc;letter-spacing:-0.018px">webpack compiled with <b style="color:#f5f543">1 warning</b></pre>
<div style="left:358.500px;top:989.500px;width:12.500px;height:23.500px;border:1px solid #ccc"></div>
<div style="left:1696px;top:875px;width:1px;height:140px;background:#2b2b2b;"></div>
<div style="left:1697px;top:875px;width:163px;height:33px;background:#37373d;"></div>
<div style="left:1697px;top:875px;width:2.1px;height:33px;background:#0078d4;"></div>
<svg style="left:1713px;top:878px;" width="22" height="24" viewBox="0 0 22 24"><path d="M11 .700l10.100 5.700v11.300L11 23.300.900 17.600V6.400z" fill="none" stroke="#9f9f9f" stroke-width="1" stroke-linejoin="round"/><path d="M11.600 12.300l9-5.100v10.200l-9 5.100z" fill="#c5c5c5"/><path d="M14 15.800l2.200-.9M14.300 18.600l2-.9M15.200 14.300v5.500M18 17.300l1.200-.600" stroke="#37373d" stroke-width="0.900" fill="none"/></svg>
<span class="t" style="left:1741px;top:877.85px;font-size:19.5px;line-height:27.3px;color:#ccc;letter-spacing:0.021px;">npm</span>
<svg style="left:1714px;top:913px;" width="20" height="22" viewBox="0 0 20 22"><path d="M5.500 1.500h9M7 1.500v6.800L1.600 19a1 1 0 0 0 .9 1.500h15a1 1 0 0 0 .9-1.500L13 8.300V1.500M4.500 14.500h11" fill="none" stroke="#c5c5c5" stroke-width="1.500" stroke-linejoin="round"/></svg>
<span class="t" style="left:1741px;top:910.85px;font-size:19.5px;line-height:27.3px;color:#ccc;letter-spacing:-0.136px;">Jest (on-…</span>
<svg style="left:21px;top:1022px;" width="20" height="22" viewBox="0 0 20 22"><g fill="none" stroke="#ccc" stroke-width="1.500"><circle cx="5" cy="4" r="2.400"/><circle cx="5" cy="18" r="2.400"/><circle cx="14.500" cy="7" r="2.400"/><path d="M5 6.400v9.200M14.500 9.400c0 3.500-9.500 2-9.500 6"/></g></svg>
<span class="t" style="left:46px;top:1020.7px;font-size:18px;line-height:25.2px;color:#ccc;letter-spacing:0.535px;">development*</span>
<svg style="left:172px;top:1022px;" width="22" height="22" viewBox="0 0 22 22"><g fill="none" stroke="#ccc" stroke-width="1.500"><path d="M3.440 7.900A7.300 7.300 0 0 1 17.570 11.040M17.160 12.900A7.300 7.300 0 0 1 3.030 9.760"/><path d="M14.700 8.200l2.900 3.200 2.900-3.200M0.100 12.600l2.900-3.200 2.900 3.200" stroke-width="1.700"/></g></svg>
<svg style="left:215.3px;top:1022.7px;" width="19" height="20" viewBox="0 0 19 20"><g fill="none" stroke="#ccc" stroke-width="1.400"><circle cx="9.500" cy="6.500" r="1.500"/><path d="M6.300 9.800a4.600 4.600 0 0 1 0-6.600M12.700 3.200a4.600 4.600 0 0 1 0 6.600M3.900 12.200a8 8 0 0 1 0-11.400M15.100 0.800a8 8 0 0 1 0 11.400M9.500 8L4.200 18.500M9.500 8l5.300 10.500M6 14.500h7"/></g></svg>
<span class="t" style="left:240px;top:1020.7px;font-size:18px;line-height:25.2px;color:#ccc;letter-spacing:-0.516px;">0</span>
<span class="t" style="left:1234px;top:1020.7px;font-size:18px;line-height:25.2px;color:#ccc;letter-spacing:-0.275px;">Ln 59, Col 28</span>
<span class="t" style="left:1361.5px;top:1020.7px;font-size:18px;line-height:25.2px;color:#ccc;letter-spacing:-0.618px;">Spaces: 2</span>
<span class="t" style="left:1460.5px;top:1020.7px;font-size:18px;line-height:25.2px;color:#ccc;letter-spacing:-0.8px;">UTF-8</span>
<span class="t" style="left:1532.5px;top:1020.7px;font-size:18px;line-height:25.2px;color:#ccc;letter-spacing:-1.258px;">LF</span>
<span class="t" style="left:1574.5px;top:1019.7px;font-size:18px;line-height:25.2px;color:#ccc;letter-spacing:0.49px;">{ }</span>
<svg style="left:1582.8px;top:1032px;" width="11" height="11" viewBox="0 0 11 11"><circle cx="5.500" cy="5.500" r="4.300" fill="#ccc" stroke="#181818" stroke-width="0.800"/><path d="M3.800 3.800l3.400 3.400M7.200 3.800L3.800 7.200" stroke="#181818" stroke-width="1.200"/></svg>
<span class="t" style="left:1602.5px;top:1020.7px;font-size:18px;line-height:25.2px;color:#ccc;letter-spacing:-0.105px;">JavaScript</span>
<svg style="left:1708.25px;top:1021.5px;" width="19" height="22" viewBox="0 0 19 22"><g fill="none" stroke="#ccc" stroke-width="1.500"><path d="M4.820 15.990A7.600 7.600 0 1 1 14.180 15.990M6.850 13.390A4.300 4.300 0 1 1 12.150 13.390"/><path d="M9.500 11v8.500" stroke-width="3" stroke-linecap="round"/></g><circle cx="9.500" cy="9.800" r="2" fill="#ccc"/></svg>
<span class="t" style="left:1732.5px;top:1020.7px;font-size:18px;line-height:25.2px;color:#ccc;letter-spacing:-0.507px;">Go Live</span>
<svg style="left:1817px;top:1021px;" width="20" height="23" viewBox="0 0 20 23"><path d="M2 17c1.600-1.500 2.100-3.500 2.100-7.500a5.400 5.400 0 0 1 7.600-4.900M15 12c.2 2.300.7 3.700 2 5H2M7.300 18.800a2.200 2.200 0 0 0 4.400 0" fill="none" stroke="#ccc" stroke-width="1.500" stroke-linejoin="round"/><circle cx="15.200" cy="6.300" r="3.900" fill="#ccc"/></svg>
<div style="left:0px;top:0px;width:1px;height:1048px;background:#2e2e2e;"></div>
<div style="left:1859px;top:0px;width:1px;height:1048px;background:#343434;"></div>
<div style="left:0px;top:1047px;width:1860px;height:1px;background:#3a3a3a;"></div>
</div></body></html>
